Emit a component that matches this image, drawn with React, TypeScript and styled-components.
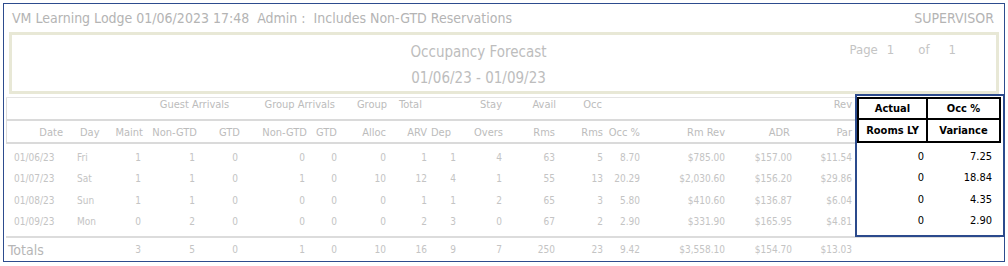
import React from 'react';
import styled, { createGlobalStyle } from 'styled-components';

const GlobalStyle = createGlobalStyle`
  html, body { margin: 0; padding: 0; background: #ffffff; }
  body {
    font-family: "DejaVu Sans Condensed", "DejaVu Sans", Verdana, sans-serif;
    font-stretch: condensed;
  }
`;

type Align = 'left' | 'right' | 'center';
type Col = { w: number; ha: Align; hp: number; da: Align; dp: number };

const cols: Col[] = [
  { w: 62, ha: 'right', hp: 5, da: 'left', dp: 8 },
  { w: 40, ha: 'left', hp: 12, da: 'left', dp: 9 },
  { w: 38, ha: 'right', hp: 3, da: 'right', dp: 5 },
  { w: 54, ha: 'right', hp: 3, da: 'right', dp: 5 },
  { w: 43, ha: 'right', hp: 3, da: 'right', dp: 5 },
  { w: 67, ha: 'right', hp: 3, da: 'right', dp: 5 },
  { w: 30, ha: 'right', hp: 3, da: 'right', dp: 3 },
  { w: 50, ha: 'right', hp: 4, da: 'right', dp: 4 },
  { w: 40, ha: 'right', hp: 3, da: 'right', dp: 3 },
  { w: 30, ha: 'right', hp: 9, da: 'right', dp: 4 },
  { w: 46, ha: 'right', hp: 3, da: 'right', dp: 4 },
  { w: 53, ha: 'right', hp: 4, da: 'right', dp: 4 },
  { w: 47, ha: 'right', hp: 3, da: 'right', dp: 3 },
  { w: 38, ha: 'right', hp: 4, da: 'right', dp: 4 },
  { w: 85, ha: 'right', hp: 4, da: 'right', dp: 4 },
  { w: 66, ha: 'right', hp: 5, da: 'right', dp: 3 },
  { w: 60, ha: 'right', hp: 3, da: 'right', dp: 3 },
  { w: 145, ha: 'right', hp: 0, da: 'right', dp: 0 },
];

const subHeads = [
  'Date', 'Day', 'Maint', 'Non-GTD', 'GTD', 'Non-GTD', 'GTD', 'Alloc', 'ARV', 'Dep',
  'Overs', 'Rms', 'Rms', 'Occ %', 'Rm Rev', 'ADR', 'Par', '',
];

type TopHead = { text: string; span: number; align: Align; pad: number };
const topHeads: TopHead[] = [
  { text: '', span: 2, align: 'right', pad: 0 },
  { text: '', span: 1, align: 'right', pad: 0 },
  { text: 'Guest Arrivals', span: 2, align: 'center', pad: 0 },
  { text: 'Group Arrivals', span: 2, align: 'right', pad: 5 },
  { text: 'Group', span: 1, align: 'right', pad: 3 },
  { text: 'Total', span: 1, align: 'left', pad: 9 },
  { text: '', span: 1, align: 'right', pad: 0 },
  { text: 'Stay', span: 1, align: 'right', pad: 4 },
  { text: 'Avail', span: 1, align: 'right', pad: 3 },
  { text: 'Occ', span: 1, align: 'right', pad: 4 },
  { text: '', span: 1, align: 'right', pad: 0 },
  { text: '', span: 1, align: 'right', pad: 0 },
  { text: '', span: 1, align: 'right', pad: 0 },
  { text: 'Rev', span: 1, align: 'right', pad: 3 },
  { text: '', span: 1, align: 'right', pad: 0 },
];

const rows: { cells: string[]; actual: string; variance: string }[] = [
  { cells: ['01/06/23', 'Fri', '1', '1', '0', '0', '0', '0', '1', '1', '4', '63', '5', '8.70', '$785.00', '$157.00', '$11.54', ''], actual: '0', variance: '7.25' },
  { cells: ['01/07/23', 'Sat', '1', '1', '0', '1', '0', '10', '12', '4', '1', '55', '13', '20.29', '$2,030.60', '$156.20', '$29.86', ''], actual: '0', variance: '18.84' },
  { cells: ['01/08/23', 'Sun', '1', '1', '0', '0', '0', '0', '1', '1', '2', '65', '3', '5.80', '$410.60', '$136.87', '$6.04', ''], actual: '0', variance: '4.35' },
  { cells: ['01/09/23', 'Mon', '0', '2', '0', '0', '0', '0', '2', '3', '0', '67', '2', '2.90', '$331.90', '$165.95', '$4.81', ''], actual: '0', variance: '2.90' },
];

const totals = ['3', '5', '0', '1', '0', '10', '16', '9', '7', '250', '23', '9.42', '$3,558.10', '$154.70', '$13.03', ''];

const Page = styled.div`
  width: 1008px;
  height: 266px;
  box-sizing: border-box;
  padding: 3px 0 0 3px;
`;

const Frame = styled.div`
  position: relative;
  width: 1002px;
  height: 259px;
  box-sizing: border-box;
  border: 1px solid #2d4c8e;
  display: flex;
  flex-direction: column;
`;

const TopBar = styled.div`
  height: 28px;
  display: flex;
  align-items: center;
  justify-content: space-between;
  padding: 0 10px 0 8px;
  font-size: 14px;
  color: #b4b4b4;
  white-space: pre;
`;

const TitleBox = styled.div`
  margin: 0 5px;
  height: 62px;
  box-sizing: border-box;
  border: 3px solid #e8e8d6;
  display: grid;
  grid-template-columns: 1fr auto 1fr;
`;

const TitleCenter = styled.div`
  grid-column: 2;
  margin-right: 51px;
  padding-top: 4px;
  text-align: center;
  font-size: 15px;
  line-height: 26px;
  color: #bdbdbd;
`;

const PageInfo = styled.div`
  grid-column: 3;
  justify-self: end;
  padding: 2px 40px 0 0;
  font-size: 13px;
  line-height: 26px;
  color: #c4c4c4;
  display: flex;
`;

const PagePart = styled.span<{ $gap: number }>`
  margin-left: ${(p) => p.$gap}px;
`;

const Grid = styled.table`
  margin: 3px 0 0 2px;
  width: 994px;
  border-collapse: separate;
  border-spacing: 0;
  table-layout: fixed;
  color: #c4c4c4;
`;

const padCss = (p: { $align: Align; $pad: number }) => `
  text-align: ${p.$align};
  padding-left: ${p.$align === 'left' ? p.$pad : 0}px;
  padding-right: ${p.$align === 'right' ? p.$pad : 0}px;
`;

const TopHeadCell = styled.th<{ $align: Align; $pad: number; $first?: boolean }>`
  ${padCss}
  height: 24px;
  box-sizing: border-box;
  vertical-align: top;
  padding-top: 0;
  padding-bottom: 0;
  font-size: 11px;
  line-height: 14px;
  font-weight: normal;
  color: #bcbcbc;
  white-space: nowrap;
  border-top: 1px solid #e4e4e4;
  border-bottom: 2px solid #dadada;
  box-shadow: ${(p) => (p.$first ? 'inset 1px 0 0 #dcdcdc' : 'none')};
`;

const SubHeadCell = styled.th<{ $align: Align; $pad: number; $first?: boolean }>`
  ${padCss}
  height: 23px;
  box-sizing: border-box;
  vertical-align: top;
  padding-top: 5px;
  padding-bottom: 0;
  font-size: 11px;
  line-height: 14px;
  font-weight: normal;
  color: #bcbcbc;
  white-space: nowrap;
  border-bottom: 2px solid #dadada;
  box-shadow: ${(p) => (p.$first ? 'inset 1px 0 0 #dcdcdc' : 'none')};
`;

const DataRow = styled.tr`
  height: 21.5px;
`;

const DataCell = styled.td<{ $align: Align; $pad: number }>`
  ${padCss}
  box-sizing: border-box;
  height: 21.5px;
  padding-top: 5.5px;
  padding-bottom: 0;
  vertical-align: top;
  font-size: 10px;
  line-height: 16px;
  white-space: nowrap;
`;

const SpacerRow = styled.tr`
  height: 6px;
`;

const TotalCell = styled.td<{ $align: Align; $pad: number; $big?: boolean }>`
  ${padCss}
  box-sizing: border-box;
  height: 23px;
  padding-top: 3px;
  padding-bottom: 0;
  vertical-align: middle;
  font-size: ${(p) => (p.$big ? 14 : 10)}px;
  line-height: 16px;
  color: ${(p) => (p.$big ? '#b6b6b6' : '#c4c4c4')};
  white-space: nowrap;
  border-top: 2px solid #dcdcdc;
`;

const Overlay = styled.div`
  position: absolute;
  left: 851px;
  top: 90px;
  width: 150px;
  height: 143px;
  box-sizing: border-box;
  border: 2px solid #2b4a8c;
  background: #ffffff;
  padding-top: 1px;
`;

const OverlayTable = styled.table`
  width: 144px;
  border-collapse: separate;
  border-spacing: 0;
  table-layout: fixed;
  color: #000000;
`;

const OverlayHead = styled.th<{ $top?: boolean; $left?: boolean }>`
  box-sizing: border-box;
  height: 23px;
  padding: 0;
  text-align: center;
  vertical-align: middle;
  font-size: 11px;
  font-weight: bold;
  line-height: 14px;
  white-space: nowrap;
  border-right: 2px solid #000;
  border-bottom: 2px solid #000;
  border-top: ${(p) => (p.$top ? '2px solid #000' : 'none')};
  border-left: ${(p) => (p.$left ? '2px solid #000' : 'none')};
`;

const OverlayCell = styled.td<{ $pad: number }>`
  box-sizing: border-box;
  height: 21.5px;
  padding: 5.5px ${(p) => p.$pad}px 0 0;
  vertical-align: top;
  text-align: right;
  font-size: 11px;
  line-height: 16px;
  white-space: nowrap;
`;

export default function App() {
  return (
    <Page>
      <GlobalStyle />
      <Frame>
        <TopBar>
          <span>VM Learning Lodge 01/06/2023 17:48  Admin :  Includes Non-GTD Reservations</span>
          <span>SUPERVISOR</span>
        </TopBar>
        <TitleBox>
          <TitleCenter>
            <div>Occupancy Forecast</div>
            <div>01/06/23 - 01/09/23</div>
          </TitleCenter>
          <PageInfo>
            <PagePart $gap={0}>Page</PagePart>
            <PagePart $gap={9}>1</PagePart>
            <PagePart $gap={24}>of</PagePart>
            <PagePart $gap={19}>1</PagePart>
          </PageInfo>
        </TitleBox>
        <Grid>
          <colgroup>
            {cols.map((c, i) => (
              <col key={i} style={{ width: c.w }} />
            ))}
          </colgroup>
          <thead>
            <tr>
              {topHeads.map((h, i) => (
                <TopHeadCell key={i} colSpan={h.span} $align={h.align} $pad={h.pad} $first={i === 0}>
                  {h.text}
                </TopHeadCell>
              ))}
            </tr>
            <tr>
              {subHeads.map((h, i) => (
                <SubHeadCell key={i} $align={cols[i].ha} $pad={cols[i].hp} $first={i === 0}>
                  {h}
                </SubHeadCell>
              ))}
            </tr>
          </thead>
          <tbody>
            {rows.map((r, ri) => (
              <DataRow key={ri}>
                {r.cells.map((v, i) => (
                  <DataCell key={i} $align={cols[i].da} $pad={cols[i].dp}>
                    {v}
                  </DataCell>
                ))}
              </DataRow>
            ))}
            <SpacerRow>
              <td colSpan={cols.length} />
            </SpacerRow>
            <tr>
              <TotalCell colSpan={2} $align="left" $pad={2} $big>
                Totals
              </TotalCell>
              {totals.map((v, i) => (
                <TotalCell key={i} $align={cols[i + 2].da} $pad={cols[i + 2].dp}>
                  {v}
                </TotalCell>
              ))}
            </tr>
          </tbody>
        </Grid>
        <Overlay>
          <OverlayTable>
            <colgroup>
              <col style={{ width: 71 }} />
              <col style={{ width: 73 }} />
            </colgroup>
            <thead>
              <tr>
                <OverlayHead $top $left>Actual</OverlayHead>
                <OverlayHead $top>Occ %</OverlayHead>
              </tr>
              <tr>
                <OverlayHead $left>Rooms LY</OverlayHead>
                <OverlayHead>Variance</OverlayHead>
              </tr>
            </thead>
            <tbody>
              {rows.map((r, ri) => (
                <tr key={ri}>
                  <OverlayCell $pad={4}>{r.actual}</OverlayCell>
                  <OverlayCell $pad={9}>{r.variance}</OverlayCell>
                </tr>
              ))}
            </tbody>
          </OverlayTable>
        </Overlay>
      </Frame>
    </Page>
  );
}
